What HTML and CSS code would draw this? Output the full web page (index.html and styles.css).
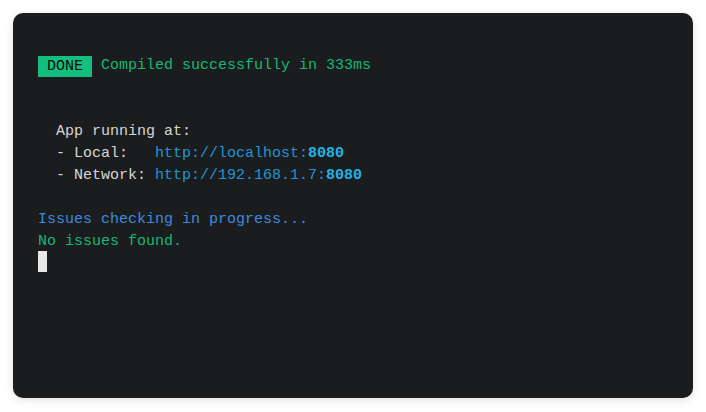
FILE: index.html
```html
<!DOCTYPE html>
<html>
<head>
<meta charset="utf-8">
<link rel="stylesheet" href="styles.css">
</head>
<body>
<div class="term">
  <div class="line"><span class="badge">DONE</span><span class="green gap">Compiled successfully in 333ms</span></div>
  <div class="line"> </div>
  <div class="line"> </div>
  <div class="line">  App running at:</div>
  <div class="line">  - Local:   <span class="link">http://localhost:<b>8080</b></span></div>
  <div class="line">  - Network: <span class="link">http://192.168.1.7:<b>8080</b></span></div>
  <div class="line"> </div>
  <div class="line blue">Issues checking in progress...</div>
  <div class="line green">No issues found.</div>
  <div class="line"><span class="cursor"></span></div>
</div>
</body>
</html>
```
FILE: styles.css
```css
html, body { margin: 0; padding: 0; background: #ffffff; }
body { padding: 13px; }
.term {
  width: 680px;
  height: 385px;
  box-sizing: border-box;
  background: #1b1c1e;
  border-radius: 10px;
  box-shadow: 0 2px 8px rgba(0,0,0,0.12);
  padding: 42px 25px 0 25px;
  font-family: "Liberation Mono", "DejaVu Sans Mono", monospace;
  font-size: 15px;
  color: #d6d6d6;
}
.line { height: 22px; line-height: 22px; white-space: pre; display: flex; align-items: center; }
.badge {
  display: inline-block;
  background: #12bf7c;
  color: #0a0a0a;
  height: 21px;
  line-height: 21px;
  padding: 0 9px;
}
.gap { margin-left: 9px; }
.green { color: #14b876; }
.blue { color: #3f8ade; }
.link { color: #1b97d4; }
.link b { color: #22b4e6; font-weight: bold; }
.cursor { display: inline-block; width: 9px; height: 21px; background: #e8e8e8; margin-top: -5px; }
```
